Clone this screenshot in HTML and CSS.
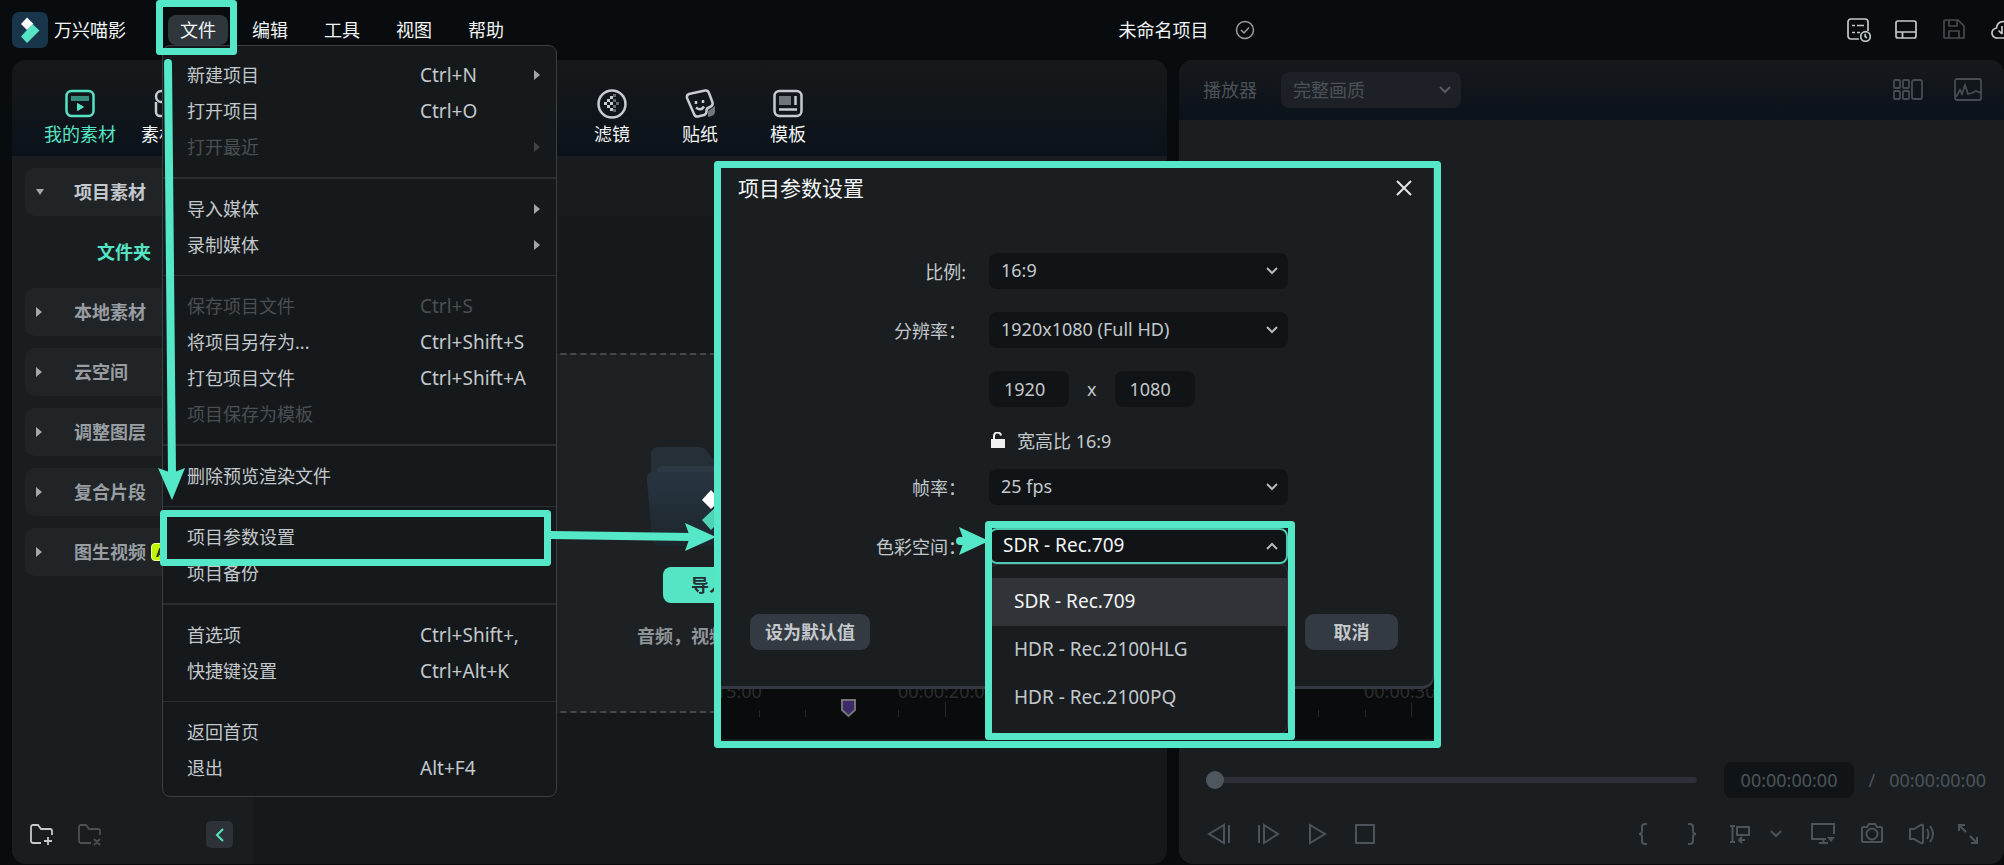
FILE: index.html
```
<!DOCTYPE html>
<html lang="zh-CN">
<head>
    <meta charset="UTF-8">
    <meta name="viewport" content="width=device-width, initial-scale=1.0">
    <title>万兴喵影</title>
    <link rel="stylesheet" href="styles.css">
</head>
<body>
    <header class="topbar">
        <div class="brand">
            <svg class="logo" width="36" height="36" viewBox="0 0 36 36">
                <rect width="36" height="36" rx="7" fill="#19354a"/>
                <path d="M15 5.500l6.500 6.500-6.500 6-6-6z" fill="#fff"/>
                <path d="M20.500 12l7 6.500L15 31l-6-6.500z" fill="#55e5c5"/>
            </svg>
            <span>万兴喵影</span>
        </div>
        <nav class="menubar">
            <div class="menu-item">
                <button type="button" class="menu-button active">文件</button>
                <div class="dropdown">
                    <button type="button"><span>新建项目</span><kbd>Ctrl+N</kbd><i class="tri"></i></button>
                    <button type="button"><span>打开项目</span><kbd>Ctrl+O</kbd></button>
                    <button type="button" disabled><span>打开最近</span><kbd></kbd><i class="tri"></i></button>
                    <hr class="thick">
                    <button type="button"><span>导入媒体</span><kbd></kbd><i class="tri"></i></button>
                    <button type="button"><span>录制媒体</span><kbd></kbd><i class="tri"></i></button>
                    <hr>
                    <button type="button" disabled><span>保存项目文件</span><kbd>Ctrl+S</kbd></button>
                    <button type="button"><span>将项目另存为...</span><kbd>Ctrl+Shift+S</kbd></button>
                    <button type="button"><span>打包项目文件</span><kbd>Ctrl+Shift+A</kbd></button>
                    <button type="button" disabled><span>项目保存为模板</span></button>
                    <hr class="thick">
                    <button type="button"><span>删除预览渲染文件</span></button>
                    <hr>
                    <button type="button"><span>项目参数设置</span></button>
                    <button type="button"><span>项目备份</span></button>
                    <hr class="thick">
                    <button type="button"><span>首选项</span><kbd>Ctrl+Shift+,</kbd></button>
                    <button type="button"><span>快捷键设置</span><kbd>Ctrl+Alt+K</kbd></button>
                    <hr>
                    <button type="button"><span>返回首页</span></button>
                    <button type="button"><span>退出</span><kbd>Alt+F4</kbd></button>
                </div>
            </div>
            <button type="button" class="menu-button">编辑</button>
            <button type="button" class="menu-button">工具</button>
            <button type="button" class="menu-button">视图</button>
            <button type="button" class="menu-button">帮助</button>
        </nav>
        <div class="project-name">
            <span>未命名项目</span>
            <svg width="20" height="20" viewBox="0 0 20 20" fill="none" stroke="#9a9fa3" stroke-width="1.500">
                <circle cx="10" cy="10" r="8.500"/>
                <path d="M6 10l3 3 5-5.500"/>
            </svg>
        </div>
        <div class="top-icons">
            <button type="button" class="icon-button" aria-label="任务列表">
                <svg width="24" height="24" viewBox="0 0 24 24" fill="none" stroke="#c3c9cd" stroke-width="1.700">
                    <path d="M12 21H4a3 3 0 0 1-3-3V4a3 3 0 0 1 3-3h14a3 3 0 0 1 3 3v9"/>
                    <path d="M5 7.500h3M10 7.500h7M5 14.500h3M10 14.500h3"/>
                    <circle cx="18.500" cy="18.500" r="4.800"/>
                    <path d="M18.200 15.800v3l1.800 1"/>
                </svg>
            </button>
            <button type="button" class="icon-button" aria-label="布局">
                <svg width="24" height="24" viewBox="0 0 24 24" fill="none" stroke="#c3c9cd" stroke-width="1.700">
                    <rect x="1" y="3" width="20" height="17" rx="2"/>
                    <path d="M1 14h20M7.500 14v6"/>
                </svg>
            </button>
            <button type="button" class="icon-button" aria-label="保存" disabled>
                <svg width="24" height="24" viewBox="0 0 24 24" fill="none" stroke="#454b50" stroke-width="1.700">
                    <path d="M2 2h13l6 6v12H2a1 1 0 0 1-1-1V3a1 1 0 0 1 1-1z"/>
                    <path d="M6 2v6h8V2M6 20v-7h10v7"/>
                </svg>
            </button>
            <button type="button" class="icon-button" aria-label="云端">
                <svg width="24" height="24" viewBox="0 0 24 24" fill="none" stroke="#c3c9cd" stroke-width="1.700">
                    <path d="M17 20H6.500a5 5 0 0 1-1-10A7 7 0 0 1 19 8a6 6 0 0 1 0 12M11 8v8M7.500 12.500L11 16"/>
                </svg>
            </button>
        </div>
    </header>

    <main class="workspace">
        <section class="media-panel">
            <div class="tabs">
                <button type="button" class="tab selected">
                    <svg width="30" height="30" viewBox="0 0 30 30" fill="none" stroke="#55e5c5" stroke-width="2.500">
                        <rect x="1.500" y="2" width="27" height="25" rx="5"/>
                        <path d="M6 9.500h18" stroke="#368c7a" stroke-width="5"/>
                        <path d="M12.500 14.500l6 3.500-6 3.500z" fill="#55e5c5" stroke-width="1"/>
                    </svg>
                    <span>我的素材</span>
                </button>
                <button type="button" class="tab">
                    <svg width="30" height="30" viewBox="0 0 30 30" fill="none" stroke="#c6cad2" stroke-width="2.500">
                        <path d="M14 13V7a5.500 5.500 0 1 0-6 6h6zM16 13V7a5.500 5.500 0 1 1 6 6h-6zM3 13v10a4 4 0 0 0 4 4h16a4 4 0 0 0 4-4V13"/>
                    </svg>
                    <span>素材库</span>
                </button>
                <button type="button" class="tab tab-filter">
                    <svg width="30" height="30" viewBox="0 0 30 30">
                        <circle cx="15" cy="15" r="13.500" fill="none" stroke="#c6cad2" stroke-width="2.500"/>
                        <g fill="#c6cad2">
                            <path d="M7 13h3v3H7zM10 10h3v3h-3zM10 16h3v3h-3zM13 7h3v3h-3zM13 13h3v3h-3zM13 19h3v3h-3z"/>
                            <path opacity=".45" d="M16 10h3v3h-3zM16 16h3v3h-3zM19 13h3v3h-3zM16 20h3v3h-3zM16 5h3v3h-3z"/>
                        </g>
                    </svg>
                    <span>滤镜</span>
                </button>
                <button type="button" class="tab">
                    <svg width="30" height="30" viewBox="0 0 30 30" fill="none" stroke="#c6cad2" stroke-width="2.500">
                        <path d="M23 22l7-5v6q0 4-7 5z" fill="#70757c" stroke="none"/>
                        <path d="M4 5l16-3.500q3-.5 4 2.500l3.500 9.500q.8 3-2.500 4.500-4 1-3.500 4.500 0 2.500-2.500 3.500l-6 1.500q-3 .5-4-2.500L2 9q-.5-3 2-4z"/>
                        <path d="M11 12v3M18 11v3" stroke-width="2.500"/>
                        <path d="M11 18.500q5 4 8-1"/>
                    </svg>
                    <span>贴纸</span>
                </button>
                <button type="button" class="tab">
                    <svg width="30" height="30" viewBox="0 0 30 30" fill="none" stroke="#c6cad2" stroke-width="2.500">
                        <rect x="1.500" y="2" width="27" height="25" rx="5"/>
                        <path d="M6 7h12v9H6z" fill="#70757c" stroke="none"/>
                        <path d="M22.500 7v9M6 20.500h18"/>
                    </svg>
                    <span>模板</span>
                </button>
            </div>
            <div class="media-body">
                <aside class="sidebar">
                    <ul class="tree">
                        <li><a href="#" class="branch open"><i class="tri down"></i>项目素材</a></li>
                        <li><a href="#" class="leaf">文件夹</a></li>
                        <li><a href="#" class="branch"><i class="tri"></i>本地素材</a></li>
                        <li><a href="#" class="branch"><i class="tri"></i>云空间</a></li>
                        <li><a href="#" class="branch"><i class="tri"></i>调整图层</a></li>
                        <li><a href="#" class="branch"><i class="tri"></i>复合片段</a></li>
                        <li><a href="#" class="branch"><i class="tri"></i>图生视频<span class="ai-badge">AI</span></a></li>
                    </ul>
                    <div class="sidebar-tools">
                        <button type="button" class="icon-button" aria-label="新建文件夹">
                            <svg width="24" height="24" viewBox="0 0 24 24" fill="none" stroke="#c3c9cd" stroke-width="1.800">
                                <path d="M11 20H3a2 2 0 0 1-2-2V4a2 2 0 0 1 2-2h5l3 4h9a2 2 0 0 1 2 2v4M18 14v8M14 18h8"/>
                            </svg>
                        </button>
                        <button type="button" class="icon-button" aria-label="删除文件夹" disabled>
                            <svg width="24" height="24" viewBox="0 0 24 24" fill="none" stroke="#4b5054" stroke-width="1.800">
                                <path d="M13 20H3a2 2 0 0 1-2-2V4a2 2 0 0 1 2-2h5l3 4h9a2 2 0 0 1 2 2v4M16 16l6 6M22 16l-6 6"/>
                            </svg>
                        </button>
                        <button type="button" class="collapse" aria-label="收起">
                            <svg width="10" height="14" viewBox="0 0 10 14" fill="none" stroke="#55e5c5" stroke-width="2"><path d="M8 1L2 7l6 6"/></svg>
                        </button>
                    </div>
                </aside>
                <div class="media-content">
                    <div class="content-bar"></div>
                    <div class="dropzone">
                        <svg class="folder" width="164" height="108" viewBox="0 0 164 108">
                            <defs>
                                <linearGradient id="front" x1="0" y1="0" x2="0" y2="1">
                                    <stop offset="0" stop-color="#283541"/>
                                    <stop offset="1" stop-color="#1c262d"/>
                                </linearGradient>
                            </defs>
                            <path d="M5 30V10q0-8 8-8h40q5 0 8 4l5 7q2 2 6 2h78q8 0 8 8v40H5z" fill="#242f37"/>
                            <path d="M11 27q0-6 6-6h128q6 0 6 6v20H11z" fill="#2d3a46"/>
                            <path d="M1 35q-1-7 6-8h150q7 1 6 8l-5 58q-1 8-8 8H14q-7 0-8-8z" fill="url(#front)"/>
                            <path d="M65 45l9 10-9 9-9-9z" fill="#fff"/>
                            <path d="M72 60l9 9-16 16-9-10z" fill="#4ed3b6"/>
                        </svg>
                        <button type="button" class="import-button">导入</button>
                        <p class="hint">音频，视频</p>
                    </div>
                </div>
            </div>
        </section>

        <section class="player-panel">
            <div class="player-head">
                <label for="quality">播放器</label>
                <span class="select-box quality">
                    <select id="quality" disabled><option>完整画质</option></select>
                    <svg width="12" height="8" viewBox="0 0 12 8"><path d="M1 1l5 5 5-5"/></svg>
                </span>
                <div class="head-icons">
                    <svg width="30" height="24" viewBox="0 0 30 24" fill="none" stroke="#464c52" stroke-width="1.800">
                        <rect x="1" y="2" width="6" height="8" rx="1"/><rect x="10" y="2" width="6" height="8" rx="1"/>
                        <rect x="1" y="13" width="6" height="8" rx="1"/><rect x="10" y="13" width="6" height="8" rx="1"/>
                        <rect x="19" y="2" width="10" height="19" rx="2"/>
                    </svg>
                    <svg width="30" height="24" viewBox="0 0 30 24" fill="none" stroke="#464c52" stroke-width="1.800">
                        <rect x="2" y="1" width="26" height="21" rx="2"/>
                        <path d="M3 19l4-7 2 4 3-9 3 9 4-1 4-2 5 2"/>
                    </svg>
                </div>
            </div>
            <div class="player-view"></div>
            <div class="timebar">
                <input type="range" class="seek" min="0" max="100" value="0" aria-label="进度">
                <span class="timecode">00:00:00:00</span>
                <span class="slash">/</span>
                <span class="total">00:00:00:00</span>
            </div>
            <div class="controls">
                <div class="play-group">
                    <button type="button" class="icon-button" aria-label="上一帧"><svg width="24" height="24" viewBox="0 0 24 24"><path d="M17 3v18L2 12zM22 3v18"/></svg></button>
                    <button type="button" class="icon-button" aria-label="下一帧"><svg width="24" height="24" viewBox="0 0 24 24"><path d="M8 3v18l14-9zM3 3v18"/></svg></button>
                    <button type="button" class="icon-button" aria-label="播放"><svg width="24" height="24" viewBox="0 0 24 24"><path d="M5 3v18l15-9z"/></svg></button>
                    <button type="button" class="icon-button" aria-label="停止"><svg width="24" height="24" viewBox="0 0 24 24"><rect x="2" y="3" width="18" height="18"/></svg></button>
                </div>
                <div class="tool-group">
                    <button type="button" class="icon-button" aria-label="入点"><svg width="24" height="24" viewBox="0 0 24 24"><path d="M16 2h-2q-3 0-3 3v4q0 3-3 3 3 0 3 3v4q0 3 3 3h2"/></svg></button>
                    <button type="button" class="icon-button" aria-label="出点"><svg width="24" height="24" viewBox="0 0 24 24"><path d="M8 2h2q3 0 3 3v4q0 3 3 3-3 0-3 3v4q0 3-3 3H8"/></svg></button>
                    <button type="button" class="icon-button wide" aria-label="插入">
                        <svg width="24" height="24" viewBox="0 0 24 24"><path d="M1 4h5M1 20h5M3.500 4v16M8 5h12v8H8zM16 18h-6M13 15l-3 3 3 3"/></svg>
                        <svg width="12" height="8" viewBox="0 0 12 8"><path d="M1 1l5 5 5-5"/></svg>
                    </button>
                    <button type="button" class="icon-button" aria-label="显示"><svg width="24" height="24" viewBox="0 0 24 24"><path d="M23 12V2H1v15h14M8 21h9M12.500 17v4"/><path d="M16 15h8l-4 5z" class="solid"/></svg></button>
                    <button type="button" class="icon-button" aria-label="截图"><svg width="24" height="24" viewBox="0 0 24 24"><path d="M3 5h4l2-3h6l2 3h4a1 1 0 0 1 1 1v13a1 1 0 0 1-1 1H3a1 1 0 0 1-1-1V6a1 1 0 0 1 1-1z"/><circle cx="12" cy="12" r="5.500"/></svg></button>
                    <button type="button" class="icon-button" aria-label="音量"><svg width="26" height="24" viewBox="0 0 26 24"><path d="M1 7h4l7-4q2-1 2 1v16q0 2-2 1l-7-4H1zM18 7q3 5 0 10M21 4q6 8 0 16"/></svg></button>
                    <button type="button" class="icon-button fullscreen" aria-label="全屏"><svg width="24" height="24" viewBox="0 0 24 24"><path d="M10 10L4 4M3 9V3h6M14 14l6 6M21 15v6h-6"/></svg></button>
                </div>
            </div>
        </section>
    </main>

    <div class="overlay-box">
        <form class="dialog">
            <div class="dialog-head">
                <h1>项目参数设置</h1>
                <button type="button" class="icon-button" aria-label="关闭">
                    <svg width="18" height="18" viewBox="0 0 18 18" fill="none" stroke="#e3e6e8" stroke-width="2"><path d="M2 2l14 14M16 2L2 16"/></svg>
                </button>
            </div>
            <div class="fields">
                <label for="ratio">比例:</label>
                <span class="select-box">
                    <select id="ratio"><option>16:9</option></select>
                    <svg width="12" height="8" viewBox="0 0 12 8"><path d="M1 1l5 5 5-5"/></svg>
                </span>
                <label for="resolution">分辨率：</label>
                <span class="select-box">
                    <select id="resolution"><option>1920x1080 (Full HD)</option></select>
                    <svg width="12" height="8" viewBox="0 0 12 8"><path d="M1 1l5 5 5-5"/></svg>
                </span>
                <div class="size-row">
                    <input type="text" value="1920" aria-label="宽度">
                    <span>x</span>
                    <input type="text" value="1080" aria-label="高度">
                </div>
                <div class="lock-row">
                    <svg width="14" height="18" viewBox="0 0 14 18"><path d="M0 7h14v9H0z" fill="#f0f0f0"/><path d="M3 7V4.500a3.500 3.500 0 0 1 7-1" fill="none" stroke="#f0f0f0" stroke-width="2"/></svg>
                    <span>宽高比 16:9</span>
                </div>
                <label for="fps">帧率：</label>
                <span class="select-box">
                    <select id="fps"><option>25 fps</option></select>
                    <svg width="12" height="8" viewBox="0 0 12 8"><path d="M1 1l5 5 5-5"/></svg>
                </span>
                <label for="colorspace">色彩空间：</label>
                <span class="select-box focused">
                    <select id="colorspace"><option>SDR - Rec.709</option></select>
                    <svg width="12" height="8" viewBox="0 0 12 8"><path d="M1 7l5-5 5 5"/></svg>
                    <ul class="options">
                        <li class="current">SDR - Rec.709</li>
                        <li>HDR - Rec.2100HLG</li>
                        <li>HDR - Rec.2100PQ</li>
                    </ul>
                </span>
            </div>
            <div class="dialog-foot">
                <button type="button" class="gray-button default">设为默认值</button>
                <button type="button" class="gray-button cancel">取消</button>
            </div>
        </form>
        <svg class="ruler" width="100%" height="52">
            <g fill="#2b2d2f">
                <text x="-55" y="9">00:00:15:00</text>
                <text x="178" y="9">00:00:20:00</text>
                <text x="644" y="9">00:00:30:00</text>
            </g>
            <path d="M39.500 21v7M85.500 21v7M178.500 21v7M225.500 13v15M598.500 21v7M645.500 21v7M691.500 13v15" stroke="#26282a"/>
            <path d="M122 11h13v10l-6.500 6-6.500-6z" fill="#3d2a6b" stroke="#747474" stroke-width="2"/>
        </svg>
    </div>

    <!-- step marks and arrows above everything -->
    <svg class="guide">
        <g fill="none" stroke="#55e8c8" stroke-width="7" stroke-linejoin="round">
            <rect x="159.500" y="3.500" width="74" height="48"/>
            <rect x="163.500" y="513.500" width="384" height="49"/>
            <rect x="717.500" y="164.500" width="720" height="580"/>
            <rect x="988.500" y="524.500" width="303" height="212"/>
        </g>
        <g stroke="#55e8c8" stroke-width="8" stroke-linecap="round">
            <path d="M168 63L172 475"/>
            <path d="M551 535L690 537"/>
            <path d="M960 541h8"/>
        </g>
        <g fill="#55e8c8">
            <path d="M172 500l-14-32 14 5 13-5z"/>
            <path d="M716 537l-31 14 5-14-5-14z"/>
            <path d="M989 541l-30 14 5-14-5-14z"/>
        </g>
    </svg>
</body>
</html>
```
FILE: styles.css
```
* {
    box-sizing: border-box;
}

body {
    margin: 0;
    height: 100vh;
    display: flex;
    flex-direction: column;
    position: relative;
    overflow: hidden;
    background-color: #080c0e;
    color: #c3c8cc;
    font-family: "Noto Sans", "Noto Sans CJK SC", sans-serif;
    font-size: 18px;
    line-height: 24px;
}

button, input, select, kbd {
    font: inherit;
    color: inherit;
}

button {
    border: none;
    padding: 0;
    background: none;
    cursor: pointer;
}

svg {
    display: block;
    flex: none;
}

ul {
    list-style: none;
    margin: 0;
    padding: 0;
}

a {
    color: inherit;
    text-decoration: none;
}

/* top bar */
.topbar {
    height: 60px;
    flex: none;
    display: flex;
    align-items: center;
    padding-left: 12px;
    color: #f2f4f5;
}

.brand {
    display: flex;
    align-items: center;
    gap: 6px;
    width: 156px;
}

.menubar {
    display: flex;
    gap: 12px;
}

.menu-item {
    position: relative;
}

.menu-button {
    width: 60px;
    height: 30px;
    border-radius: 8px;
}

.menu-button.active {
    background-color: #2f363c;
}

.project-name {
    display: flex;
    align-items: center;
    gap: 26px;
    margin: 0 auto;
    padding-left: 10px;
}

.top-icons {
    display: flex;
    gap: 24px;
    width: 157px;
    overflow: hidden;
}

.icon-button {
    flex: none;
}

.tri {
    width: 0;
    height: 0;
    border: 5px solid transparent;
    border-left: 6px solid currentColor;
    border-right: none;
}

.tri.down {
    border: 4px solid transparent;
    border-top: 6px solid currentColor;
    border-bottom: none;
}

/* file menu */
.dropdown {
    position: absolute;
    left: -6px;
    top: 30px;
    z-index: 5;
    width: 395px;
    padding: 11px 0 10px;
    background-color: #16191b;
    border: 1px solid #3a3f43;
    border-radius: 8px;
    color: #c3c8cc;
}

.dropdown button {
    display: flex;
    align-items: center;
    width: 100%;
    height: 36px;
    padding: 0 16px 0 24px;
    text-align: left;
}

.dropdown button:hover {
    background-color: #2f363c;
}

.dropdown button:disabled {
    color: #4a4f53;
}

.dropdown span {
    width: 233px;
}

.dropdown kbd {
    font-size: 19px;
}

.dropdown .tri {
    margin-left: auto;
    opacity: 0.8;
}

.dropdown hr {
    height: 1px;
    margin: 12px 0;
    border: none;
    background-color: #2a2e31;
}

.dropdown hr.thick {
    height: 2px;
}

/* workspace */
.workspace {
    flex: 1;
    min-height: 0;
    display: flex;
    gap: 12px;
    padding: 0 0 1px 12px;
}

.media-panel, .player-panel {
    display: flex;
    flex-direction: column;
    border-radius: 14px;
    overflow: hidden;
}

.media-panel {
    flex: 7;
    background-color: #16191b;
}

.tabs {
    height: 96px;
    flex: none;
    display: grid;
    grid-template-columns: repeat(2, 88px) 356px repeat(3, 88px);
    padding: 29px 0 0 24px;
    align-items: start;
    background: linear-gradient(#16191b, #0b121a);
    color: #f2f4f5;
}

.tab {
    display: flex;
    flex-direction: column;
    align-items: center;
    gap: 3px;
}

.tab-filter {
    grid-column: 4;
}

.tab.selected {
    color: #55e5c5;
}

.media-body {
    flex: 1;
    display: flex;
}

.sidebar {
    width: 241px;
    display: flex;
    flex-direction: column;
    justify-content: space-between;
    padding: 12px 13px 16px;
    background-color: #191d1f;
}

.tree {
    display: flex;
    flex-direction: column;
    gap: 12px;
}

.tree a {
    display: flex;
    align-items: center;
    height: 48px;
    font-weight: bold;
}

.branch {
    padding-left: 11px;
    border-radius: 10px;
    background-color: #202426;
    color: #979da2;
}

.branch.open {
    color: #c3c8cc;
}

.branch .tri {
    margin-right: 32px;
    color: #a3a8ac;
}

.branch .tri.down {
    margin-right: 30px;
}

.tree .leaf {
    padding-left: 72px;
    color: #55e5c5;
}

.ai-badge {
    margin-left: 5px;
    padding: 0 4px;
    border: 1px solid #e8ff9c;
    border-radius: 4px;
    background-color: #c0f500;
    color: #22301c;
    font-size: 13px;
    line-height: 16px;
}

.sidebar-tools {
    display: flex;
    align-items: center;
    gap: 24px;
    padding: 0 7px 0 5px;
}

.collapse {
    display: flex;
    align-items: center;
    justify-content: center;
    width: 27px;
    height: 27px;
    margin-left: auto;
    border-radius: 5px;
    background-color: #2c3238;
}

.media-content {
    flex: 1;
    display: flex;
    flex-direction: column;
    padding-left: 30px;
}

.content-bar {
    height: 60px;
    background-color: #191c1e;
}

.dropzone {
    display: flex;
    flex-direction: column;
    align-items: center;
    height: 360px;
    margin: 137px 12px 0 18px;
    padding-top: 90px;
    border: 2px dashed #46494c;
    background-color: #1e2123;
}

.import-button {
    width: 130px;
    height: 36px;
    margin-top: 14px;
    padding-left: 28px;
    border-radius: 8px;
    background-color: #55e5c5;
    color: #253036;
    font-weight: bold;
    text-align: left;
}

.hint {
    width: 182px;
    margin: 21px 0 0;
    color: #8e9397;
    font-weight: bold;
}

/* player */
.player-panel {
    flex: 5;
    background-color: #1a1e20;
}

.player-head {
    height: 60px;
    flex: none;
    display: flex;
    align-items: center;
    padding: 0 21px 0 24px;
    background: linear-gradient(#16191c, #0b121a);
    color: #4b5156;
}

.head-icons {
    display: flex;
    gap: 30px;
    margin-left: auto;
}

.select-box {
    position: relative;
    display: flex;
    align-items: center;
}

.select-box select {
    appearance: none;
    width: 100%;
    height: 36px;
    padding: 0 12px 2px;
    border: none;
    border-radius: 8px;
    background-color: #111416;
    opacity: 1;
}

/* chevron lies over the select */
.select-box svg {
    position: absolute;
    right: 10px;
    fill: none;
    stroke: #b4b8bb;
    stroke-width: 2;
    pointer-events: none;
}

.quality {
    width: 180px;
    margin-left: 24px;
}

.quality select {
    padding-bottom: 0;
    background-color: #1d2127;
}

.quality svg {
    stroke: #555b60;
}

.player-view {
    flex: 1;
}

.timebar {
    display: flex;
    align-items: center;
    padding: 0 18px 0 27px;
    color: #4b545b;
}

.seek {
    appearance: none;
    flex: 1;
    height: 6px;
    margin: 0 27px 0 0;
    border-radius: 3px;
    background-color: #2c3036;
}

.seek::-webkit-slider-thumb {
    appearance: none;
    width: 18px;
    height: 18px;
    border-radius: 50%;
    background-color: #4f575e;
}

.timecode {
    padding: 6px 17px;
    border-radius: 8px;
    background-color: #111416;
}

.slash {
    margin: 0 14px;
}

.controls {
    display: flex;
    justify-content: space-between;
    padding: 24px 24px 18px 28px;
}

.controls svg {
    fill: none;
    stroke: #4b545b;
    stroke-width: 2;
}

.controls .solid {
    fill: #4b545b;
    stroke: none;
}

.play-group, .tool-group {
    display: flex;
    align-items: center;
    gap: 25px;
}

.tool-group .wide {
    display: flex;
    align-items: center;
    gap: 17px;
    margin-right: 4px;
}

.tool-group .fullscreen {
    margin-left: -4px;
}

/* project settings */
.overlay-box {
    position: absolute;
    left: 720px;
    top: 167px;
    width: 714px;
    background-color: #0a0b0d;
    overflow: hidden;
}

.dialog {
    height: 522px;
    display: flex;
    flex-direction: column;
    background-color: #1a1e20;
    border-bottom: 3px solid #343a42;
    border-right: 1px solid #343a42;
    border-radius: 0 0 12px 0;
}

.dialog-head {
    display: flex;
    justify-content: space-between;
    align-items: center;
    padding: 9px 20px 0 18px;
}

.dialog-head h1 {
    margin: 0;
    color: #f2f4f5;
    font-size: 21px;
    font-weight: normal;
    line-height: 24px;
}

.fields {
    display: grid;
    grid-template-columns: 246px 299px;
    column-gap: 23px;
    row-gap: 23px;
    margin-top: 53px;
    align-items: center;
}

.fields label {
    text-align: right;
    padding-top: 1px;
}

.size-row, .lock-row {
    grid-column: 2;
    display: flex;
    align-items: center;
}

.size-row {
    gap: 18px;
}

.size-row input {
    width: 80px;
    height: 36px;
    padding: 0 15px;
    border: none;
    border-radius: 8px;
    background-color: #111416;
}

.lock-row {
    gap: 12px;
    height: 16px;
    padding: 5px 0 0 2px;
}

.focused select {
    border: 2px solid #4cc9ae;
    color: #f2f4f5;
    font-size: 19px;
}

.options {
    position: absolute;
    top: 36px;
    left: 0;
    z-index: 2;
    width: 299px;
    height: 170px;
    padding-top: 13px;
    background-color: #191d1f;
    border: 1px solid #34393d;
    border-radius: 8px;
    font-size: 19px;
}

.options li {
    height: 48px;
    padding-left: 24px;
    line-height: 46px;
}

.options .current {
    background-color: #303438;
    color: #f2f4f5;
}

.dialog-foot {
    display: flex;
    justify-content: space-between;
    margin: auto 35px 36px 30px;
}

.gray-button {
    height: 36px;
    padding: 0 15px;
    border-radius: 9px;
    background-color: #343a41;
    font-weight: bold;
}

.gray-button.cancel {
    width: 93px;
}

.ruler {
    border-bottom: 2px solid #1b1c1e;
}

.guide {
    position: absolute;
    left: 0;
    top: 0;
    z-index: 10;
    width: 100%;
    height: 100%;
    pointer-events: none;
}
```
